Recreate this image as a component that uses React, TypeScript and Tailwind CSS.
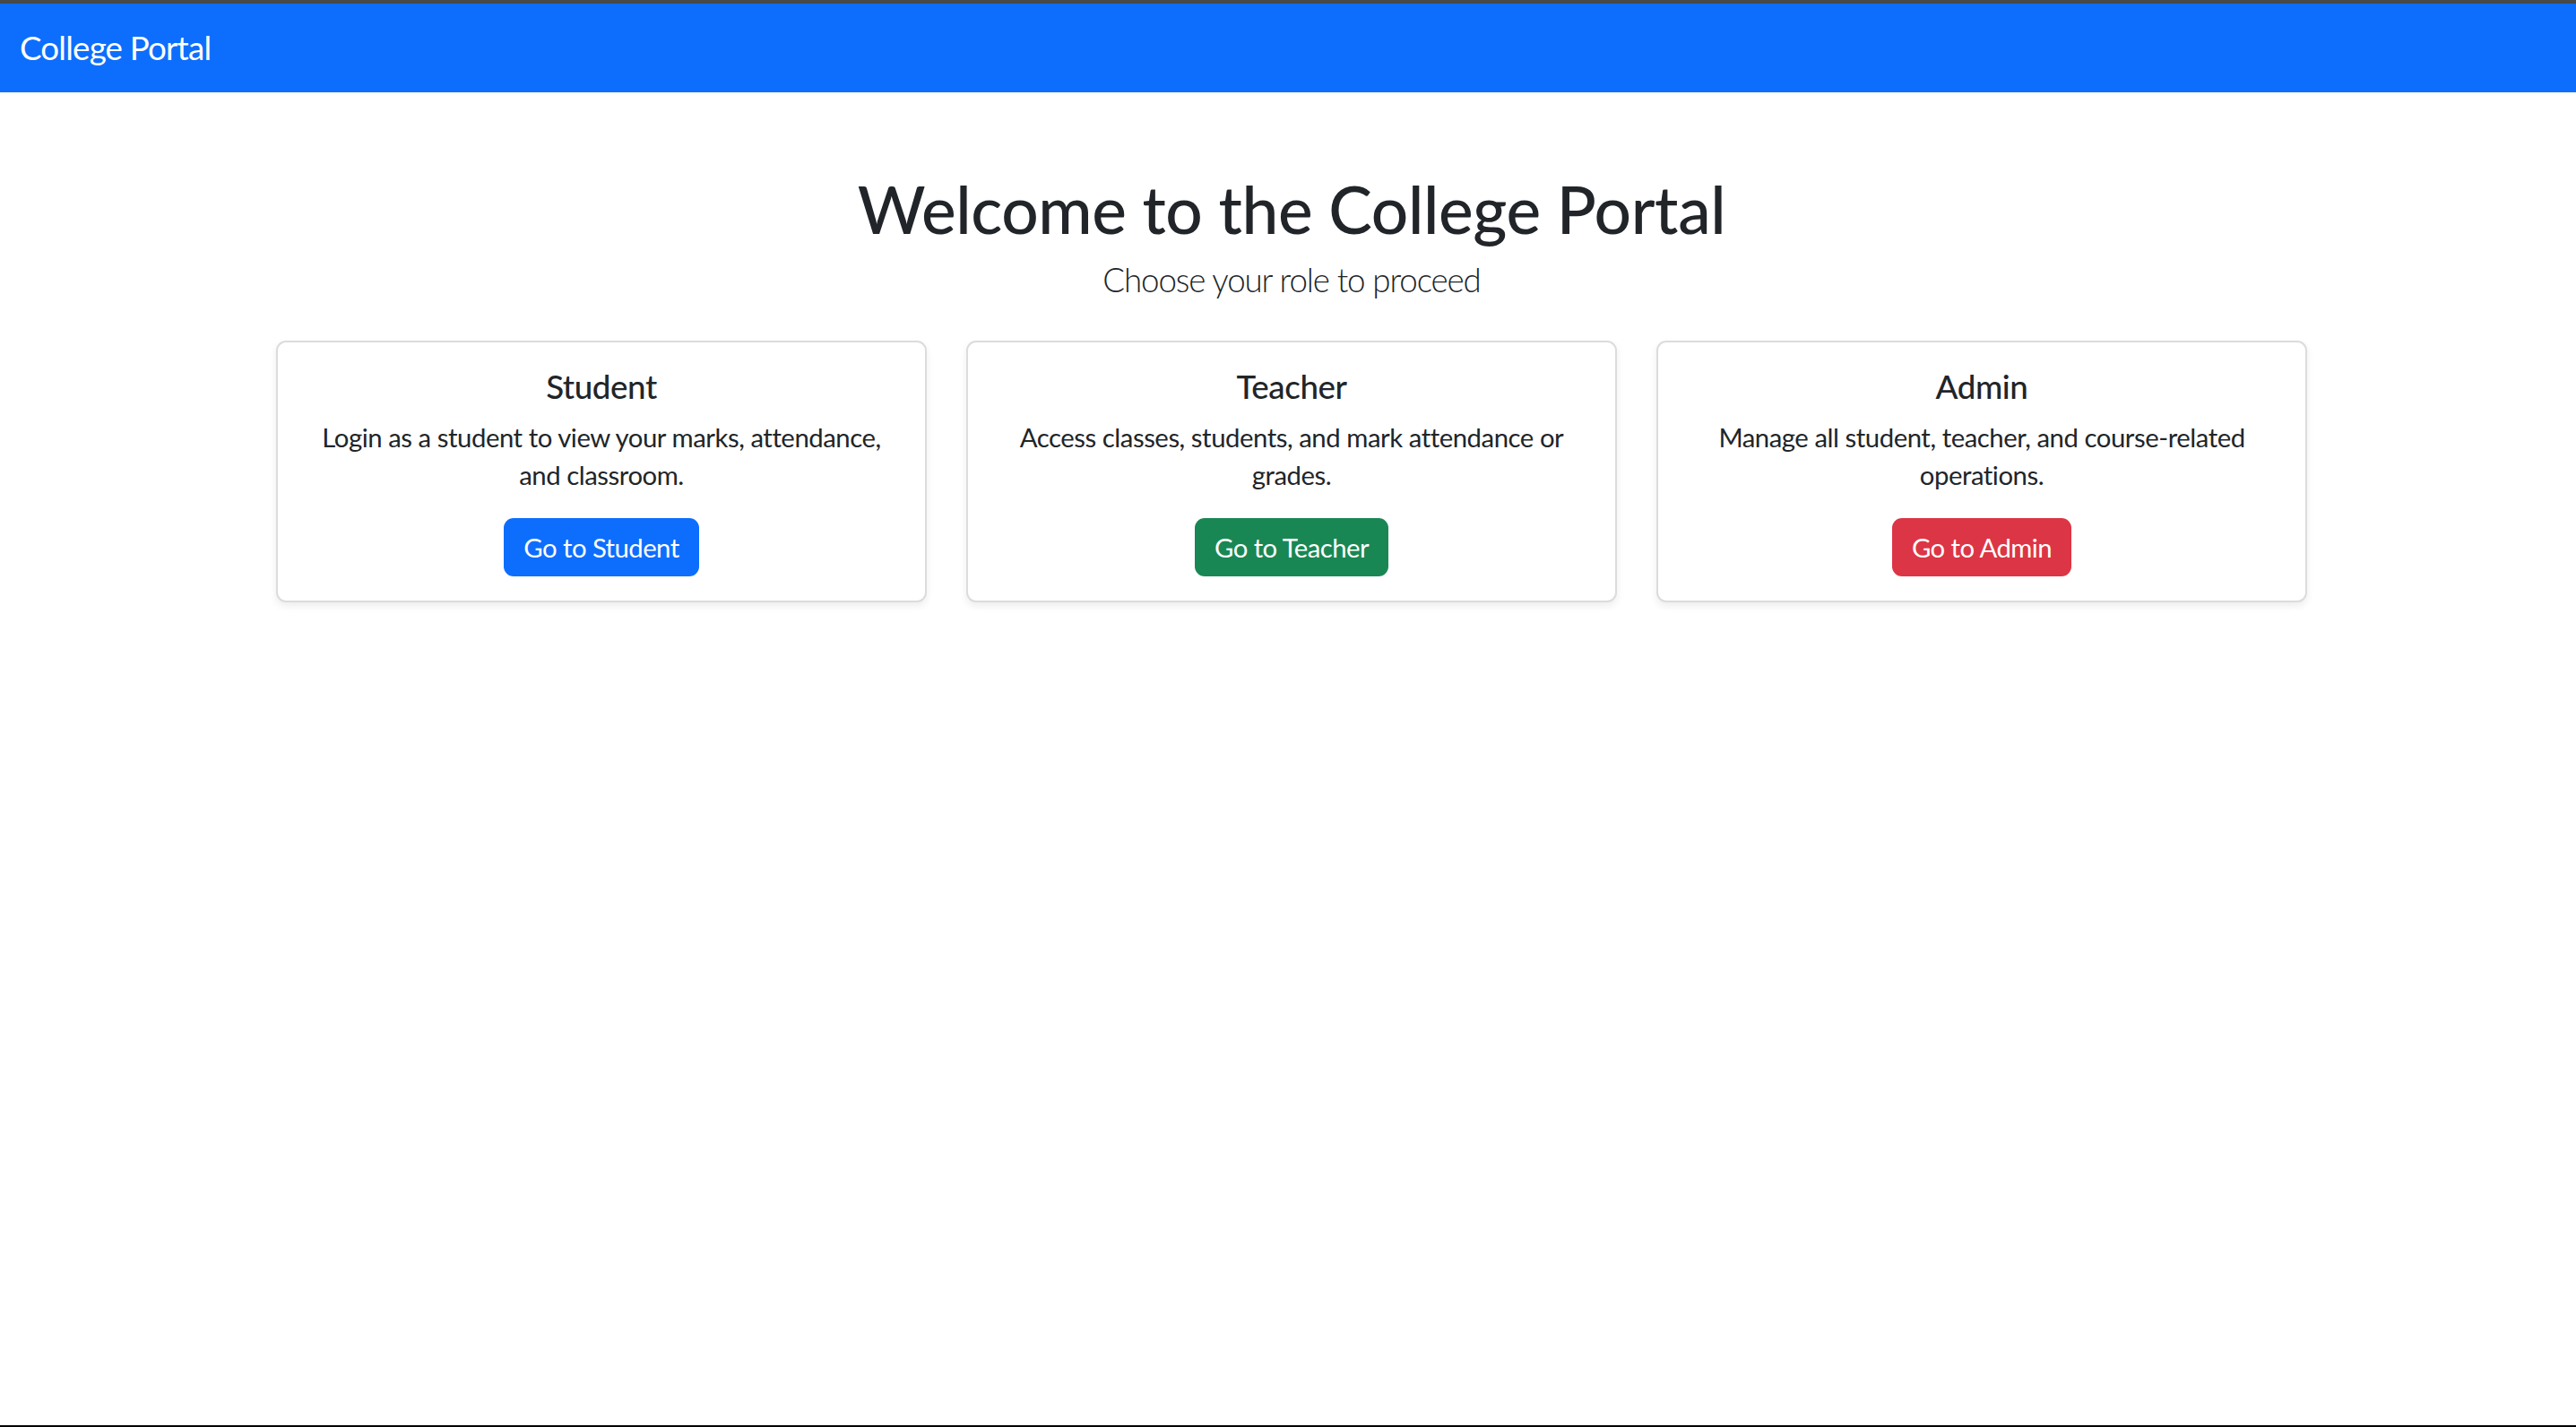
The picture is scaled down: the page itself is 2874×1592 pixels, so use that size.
import React from 'react';

type Role = {
  title: string;
  text: string;
  button: string;
  color: string;
};

const roles: Role[] = [
  {
    title: 'Student',
    text: 'Login as a student to view your marks, attendance, and classroom.',
    button: 'Go to Student',
    color: 'bg-[#0d6efd]',
  },
  {
    title: 'Teacher',
    text: 'Access classes, students, and mark attendance or grades.',
    button: 'Go to Teacher',
    color: 'bg-[#198754]',
  },
  {
    title: 'Admin',
    text: 'Manage all student, teacher, and course-related operations.',
    button: 'Go to Admin',
    color: 'bg-[#dc3545]',
  },
];

const RoleCard: React.FC<{ role: Role }> = ({ role }) => (
  <div className="flex flex-col items-center rounded-[11px] border-2 border-[#dcdcdc] bg-white px-[27px] pt-[27px] pb-[27px] text-center shadow-[0_4px_8px_rgba(0,0,0,0.075)]">
    <h5 className="text-[36.7px] font-medium leading-[44px] tracking-[-0.4px] text-[#212529]">{role.title}</h5>
    <p className="mt-[14px] text-[29.3px] leading-[42px] tracking-[-0.45px] text-[#212529]">{role.text}</p>
    <button
      className={`mt-[27px] h-[65px] rounded-[11px] px-[22px] text-[29.3px] leading-none tracking-[-0.55px] text-white ${role.color}`}
    >
      {role.button}
    </button>
  </div>
);

export default function App() {
  return (
    <div className="flex h-[1592px] flex-col bg-white font-['Lato','Liberation_Sans',sans-serif]">
      {/* browser strip + navbar */}
      <div className="h-[4px] bg-[#464a4a]" />
      <nav className="flex h-[99px] items-center bg-[#0d6efd] pl-[22px]">
        <span className="text-[36.7px] leading-none tracking-[-0.8px] text-white">College Portal</span>
      </nav>

      <main className="flex-1 pl-[8px]">
        <div className="mt-[86px] text-center">
          <h1 className="text-[73px] font-medium leading-[88px] tracking-[-0.4px] text-[#212529]">
            Welcome to the College Portal
          </h1>
          <p className="mt-[8px] text-[36.7px] font-light leading-[55px] tracking-[-1.1px] text-[#212529]">
            Choose your role to proceed
          </p>
        </div>

        <div className="mx-auto mt-[40px] grid w-[2266px] grid-cols-3 gap-[44px]">
          {roles.map((role) => (
            <RoleCard key={role.title} role={role} />
          ))}
        </div>
      </main>

      <div className="h-[2px] bg-black" />
    </div>
  );
}
